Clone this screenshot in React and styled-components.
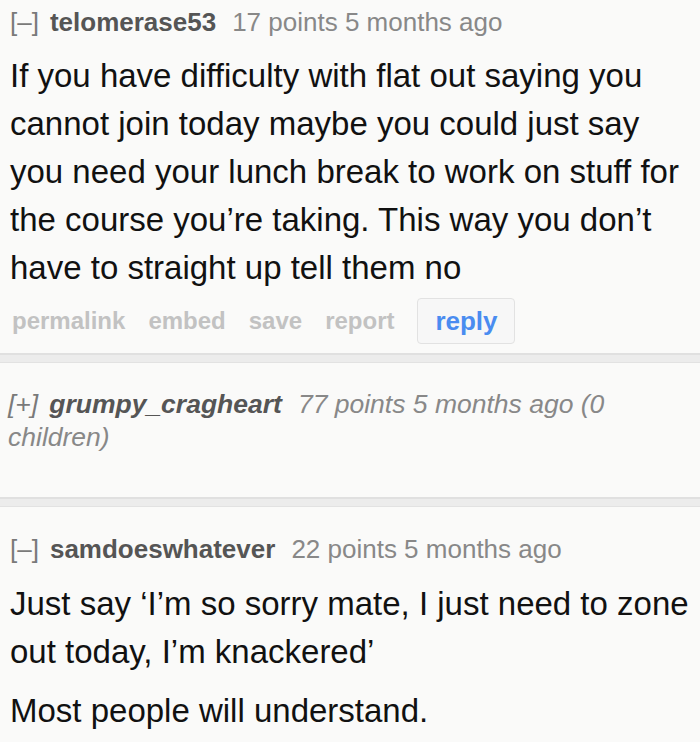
import React from "react";
import styled, { createGlobalStyle } from "styled-components";

const Global = createGlobalStyle`
  body {
    margin: 0;
    background: #fafaf9;
    font-family: "Liberation Sans", Arial, sans-serif;
  }
`;

const Page = styled.div`
  width: 700px;
  height: 742px;
  overflow: hidden;
`;

const Comment = styled.div`
  padding: ${(p) => p.top}px 6px ${(p) => p.bottom}px ${(p) => (p.collapsed ? 8 : 10)}px;
`;

const Tagline = styled.div`
  font-size: ${(p) => (p.collapsed ? 26.5 : 26)}px;
  line-height: ${(p) => (p.collapsed ? 33 : 34)}px;
  color: #888;
  font-style: ${(p) => (p.collapsed ? "italic" : "normal")};
`;

const Toggle = styled.span`
  color: #7a7a7a;
  margin-right: 11px;
`;

const Author = styled.span`
  font-weight: bold;
  color: #555;
  margin-right: 16px;
`;

const Body = styled.div`
  margin-top: ${(p) => p.gap}px;
  font-size: 33px;
  line-height: 48px;
  color: #111;
`;

const Para = styled.p`
  margin: 0 0 11px;
`;

const Actions = styled.div`
  display: flex;
  align-items: center;
  gap: 23px;
  margin-top: 6px;
  padding-left: 2px;
`;

const Action = styled.span`
  font-size: 24px;
  font-weight: bold;
  color: #c2c2c2;
`;

const ReplyButton = styled.button`
  width: 98px;
  height: 46px;
  border: 1px solid #e2e2e2;
  border-radius: 4px;
  background: #f7f7f7;
  color: #4a8cf0;
  font-family: inherit;
  font-size: 26px;
  font-weight: bold;
  padding: 0;
`;

const Separator = styled.div`
  height: 10px;
  background: #ececec;
  border-top: 2px solid #e0e0e0;
  border-bottom: 1px solid #e2e2e2;
  box-sizing: border-box;
`;

export default function App() {
  return (
    <Page>
      <Global />
      <Comment top={5} bottom={9}>
        <Tagline>
          <Toggle>[–]</Toggle>
          <Author>telomerase53</Author>17 points 5 months ago
        </Tagline>
        <Body gap={13}>
          If you have difficulty with flat out saying you cannot join today maybe you could just say you need your lunch break to work on stuff for the course you’re taking. This way you don’t have to straight up tell them no
        </Body>
        <Actions>
          <Action>permalink</Action>
          <Action>embed</Action>
          <Action>save</Action>
          <Action>report</Action>
          <ReplyButton>reply</ReplyButton>
        </Actions>
      </Comment>
      <Separator />
      <Comment collapsed top={25} bottom={43}>
        <Tagline collapsed>
          <Toggle>[+]</Toggle>
          <Author>grumpy_cragheart</Author>77 points 5 months ago (0 children)
        </Tagline>
      </Comment>
      <Separator />
      <Comment top={25} bottom={0}>
        <Tagline>
          <Toggle>[–]</Toggle>
          <Author>samdoeswhatever</Author>22 points 5 months ago
        </Tagline>
        <Body gap={14}>
          <Para>Just say ‘I’m so sorry mate, I just need to zone out today, I’m knackered’</Para>
          <Para>Most people will understand.</Para>
        </Body>
        <Actions>
          <Action>permalink</Action>
          <Action>embed</Action>
          <Action>save</Action>
          <Action>report</Action>
          <ReplyButton>reply</ReplyButton>
        </Actions>
      </Comment>
    </Page>
  );
}
